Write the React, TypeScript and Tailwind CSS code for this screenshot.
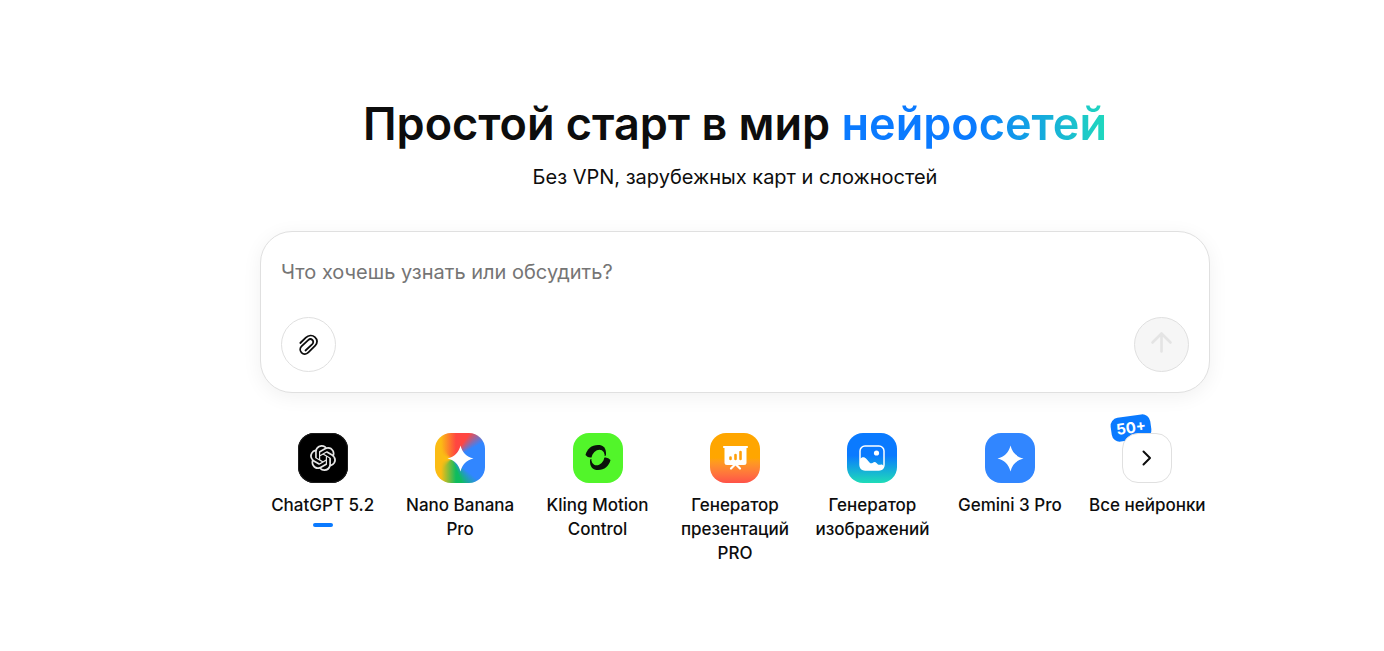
import type { ReactNode } from "react";
import { SiOpenai } from "react-icons/si";

function SparkIcon() {
  return (
    <svg viewBox="0 0 50 50" className="w-full h-full" fill="#fff">
      <path d="M25.500 12.500C27.300 19.600 31.400 23.700 38.500 25.500C31.400 27.300 27.300 31.400 25.500 38.500C23.700 31.400 19.600 27.300 12.500 25.500C19.600 23.700 23.700 19.600 25.500 12.500Z" />
    </svg>
  );
}

function KlingIcon() {
  return (
    <svg viewBox="0 0 50 50" className="w-full h-full">
      <g fill="#0b120b">
        <path d="M12.500 22C14 16 18.500 12 25 12C30 12 33.500 14.500 33 22.500L25 24.500L17.500 24.500Q14.500 24.500 12.500 22Z" />
        <path d="M37.500 27C36 33 31.500 37 25 37C20 37 16.500 34.500 17 26.500L25 24.500L32.500 24.500Q35.500 24.500 37.500 27Z" />
      </g>
      <ellipse cx="25" cy="24.500" rx="6.200" ry="8.200" transform="rotate(28 25 24.500)" fill="#52f52a" />
    </svg>
  );
}

function PresentationIcon() {
  return (
    <svg viewBox="0 0 50 50" className="w-full h-full">
      <path
        d="M14 14H37M25.500 31L21 35.500M25.500 31L30 35.500"
        stroke="#fff"
        strokeWidth="2.200"
        strokeLinecap="round"
      />
      <path d="M14.500 14H36.500V29.500Q36.500 32 34 32H17Q14.500 32 14.500 29.500Z" fill="#fff" />
      <path
        d="M20.500 24.500V26M25.500 22V26M30.500 19V26"
        stroke="#ffa00a"
        strokeWidth="2.600"
        strokeLinecap="round"
      />
    </svg>
  );
}

function ImageIcon() {
  return (
    <svg viewBox="0 0 50 50" className="w-full h-full">
      <rect x="13" y="13" width="24" height="24" rx="5" fill="none" stroke="#fff" strokeWidth="1.500" />
      <circle cx="29.500" cy="20" r="2.600" fill="#fff" />
      <path
        d="M13 26C15 23.500 17.500 23.500 19.500 26L22.500 29.500C23.500 30.500 24.500 30.500 25.500 30C27 29 28 28.500 29.500 30L31 31.500C32.500 32.500 33.500 31 35 31.500L37 33V33C37 35.500 35.500 37 33 37H17C14.500 37 13 35.500 13 33Z"
        fill="#fff"
      />
    </svg>
  );
}

type Model = {
  name: string;
  tile: string;
  icon: ReactNode;
  active?: boolean;
};

const models: Model[] = [
  {
    name: "ChatGPT 5.2",
    tile: "bg-black text-[#e6e6e6] ring-1 ring-inset ring-[#1c1c1c]",
    icon: <SiOpenai className="w-[26px] h-[26px]" />,
    active: true,
  },
  {
    name: "Nano Banana Pro",
    tile: "bg-[linear-gradient(90deg,#fbbc14_12%,transparent_42%),conic-gradient(from_0deg_at_34%_52%,#ff4641_0deg,#ff4641_34deg,#3186ff_62deg,#3186ff_128deg,#0ebc5f_158deg,#0ebc5f_220deg,#fbbc14_260deg,#fbbc14_290deg,#ff4641_325deg,#ff4641_360deg)]",
    icon: <SparkIcon />,
  },
  { name: "Kling Motion Control", tile: "bg-[#52f52a]", icon: <KlingIcon /> },
  {
    name: "Генератор презентаций PRO",
    tile: "bg-linear-to-b from-[#ffa600] from-50% to-[#ff5148]",
    icon: <PresentationIcon />,
  },
  {
    name: "Генератор изображений",
    tile: "bg-[linear-gradient(180deg,#0a7aff_45%,#1fdcb8)]",
    icon: <ImageIcon />,
  },
  { name: "Gemini 3 Pro", tile: "bg-[#3186ff]", icon: <SparkIcon /> },
];

function ModelButton({ model }: { model: Model }) {
  return (
    <button type="button" className="flex flex-col items-center cursor-pointer">
      <span
        className={`w-[50px] h-[50px] rounded-2xl overflow-hidden flex items-center justify-center ${model.tile}`}
      >
        {model.icon}
      </span>
      <span className="mt-[10px] text-[17px] leading-6 font-medium">{model.name}</span>
      {model.active && <span className="mt-[6px] w-5 h-1 rounded-full bg-[#0a7aff]" />}
    </button>
  );
}

export default function App() {
  return (
    <main className="min-h-screen bg-white pl-[86px] font-['Inter',sans-serif] text-[#0d0d0d]">
      <div className="max-w-[950px] mx-auto pt-24">
        <div className="text-center">
          <h1 className="text-[45px] leading-[56px] font-semibold">
            Простой старт в мир{" "}
            <span className="bg-[linear-gradient(90deg,#0a7aff_50%,#20d9bd)] bg-clip-text text-transparent">
              нейросетей
            </span>
          </h1>
          <p className="mt-3 text-xl leading-[26px]">Без VPN, зарубежных карт и сложностей</p>
        </div>

        <form
          className="mt-[41px] p-5 rounded-[32px] border border-[#e0e0e0] bg-white shadow-[0_4px_20px_rgba(0,0,0,0.06)]"
          onSubmit={(e) => e.preventDefault()}
        >
          <textarea
            aria-label="Что хочешь узнать или обсудить?"
            placeholder="Что хочешь узнать или обсудить?"
            className="block w-full h-[65px] pt-2 text-xl leading-6 resize-none outline-none placeholder:text-[#757575]"
          />
          <div className="flex items-center justify-between">
            <button
              type="button"
              aria-label="Прикрепить файл"
              className="w-[55px] h-[55px] rounded-full border border-[#e0e0e0] flex items-center justify-center cursor-pointer"
            >
              <svg
                viewBox="0 0 24 24"
                className="w-6 h-6"
                fill="none"
                stroke="currentColor"
                strokeWidth="1.800"
                strokeLinecap="round"
              >
                <path d="M3.300 10L8.800 4.700C11.500 2.200 15.300 1.900 17.900 4.100C20.700 6.500 20.700 10.200 18.200 12.600L11.400 19.400C9.300 21.500 6.300 21.500 4.500 19.700C2.700 17.800 2.800 15 4.700 13.100L11.200 7.100C12.500 5.900 14.300 5.900 15.400 7C16.600 8.200 16.500 9.900 15.300 11.100L8.500 17.500" />
              </svg>
            </button>
            <button
              type="submit"
              disabled
              aria-label="Отправить"
              className="w-[55px] h-[55px] rounded-full border border-[#e0e0e0] bg-[#f6f6f6] text-[#e4e4e4] flex items-center justify-center"
            >
              <svg
                viewBox="0 0 24 24"
                className="w-6 h-6 overflow-visible"
                fill="none"
                stroke="currentColor"
                strokeWidth="2.600"
                strokeLinecap="round"
                strokeLinejoin="round"
              >
                <path d="M11.500 18.500V0.500M2.500 9.500L11.500 0.500L20.500 9.500" />
              </svg>
            </button>
          </div>
        </form>

        <div className="mt-10 grid grid-cols-7 gap-3 items-start">
          {models.map((model) => (
            <ModelButton key={model.name} model={model} />
          ))}
          <button type="button" className="flex flex-col items-center cursor-pointer">
            <span className="relative w-[50px] h-[50px]">
              <span className="absolute -top-[17px] -left-[11px] w-10 h-6 rounded-lg bg-[#0a7aff] text-white text-[15px] leading-6 font-bold -rotate-8">
                50+
              </span>
              <span className="relative w-full h-full rounded-2xl border border-[#e0e0e0] bg-white flex items-center justify-center">
                <svg
                  viewBox="0 0 24 24"
                  className="w-6 h-6"
                  fill="none"
                  stroke="currentColor"
                  strokeWidth="2"
                  strokeLinecap="round"
                  strokeLinejoin="round"
                >
                  <path d="M8.500 5.500L15 12L8.500 18.500" />
                </svg>
              </span>
            </span>
            <span className="mt-[10px] text-[17px] leading-6 font-medium whitespace-nowrap">Все нейронки</span>
          </button>
        </div>
      </div>
    </main>
  );
}
